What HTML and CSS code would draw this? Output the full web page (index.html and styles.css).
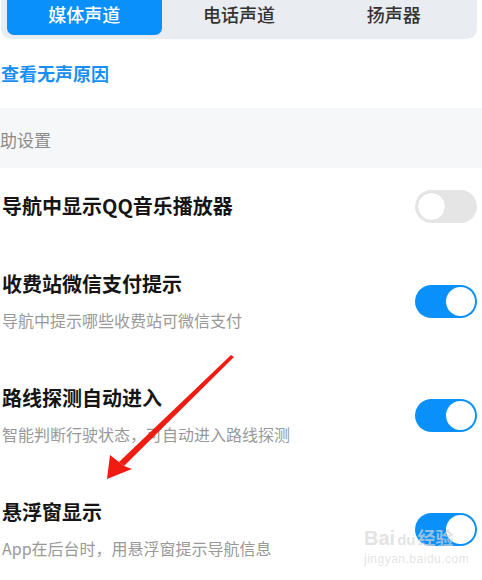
FILE: index.html
```html
<!DOCTYPE html>
<html lang="zh-CN">
<head>
<meta charset="utf-8">
<link rel="stylesheet" href="styles.css">
</head>
<body>
<div class="page">
  <div class="segment">
    <div class="tab active">媒体声道</div>
    <div class="tab">电话声道</div>
    <div class="tab">扬声器</div>
  </div>
  <div class="link-row"><span class="link">查看无声原因</span></div>
  <div class="section-head">助设置</div>
  <div class="row row-single">
    <div class="texts"><div class="title">导航中显示QQ音乐播放器</div></div>
    <div class="switch"><span class="knob"></span></div>
  </div>
  <div class="row">
    <div class="texts">
      <div class="title">收费站微信支付提示</div>
      <div class="sub">导航中提示哪些收费站可微信支付</div>
    </div>
    <div class="switch on"><span class="knob"></span></div>
  </div>
  <div class="row">
    <div class="texts">
      <div class="title">路线探测自动进入</div>
      <div class="sub">智能判断行驶状态，可自动进入路线探测</div>
    </div>
    <div class="switch on"><span class="knob"></span></div>
  </div>
  <div class="row">
    <div class="texts">
      <div class="title">悬浮窗显示</div>
      <div class="sub">App在后台时，用悬浮窗提示导航信息</div>
    </div>
    <div class="switch on"><span class="knob"></span></div>
  </div>

  <svg class="arrow" width="482" height="580" viewBox="0 0 482 580">
    <polygon points="231,361 234,363 124,472 119,468" fill="#f01c12"/>
    <polygon points="107,485 110,461 119,468 124,472 132,475" fill="#f01c12"/>
  </svg>

  <div class="watermark">
    <div class="wm-logo"><span class="wm-bai">Bai</span><span class="wm-paw">du</span><span class="wm-jy">经验</span></div>
    <div class="wm-url">jingyan.baidu.com</div>
  </div>
</div>
</body>
</html>
```

FILE: styles.css
```css
html, body {
  margin: 0;
  padding: 0;
  background: #ffffff;
}
body {
  font-family: "Noto Sans CJK SC", "Noto Sans", sans-serif;
  width: 482px;
  height: 580px;
  overflow: hidden;
}
.page {
  position: relative;
  width: 482px;
  height: 580px;
}
.segment {
  display: grid;
  grid-template-columns: repeat(3, 1fr);
  margin: -6px 0 0 1px;
  width: 476px;
  box-sizing: border-box;
  padding: 0 6px 4px 6px;
  background: #e9ecf0;
  border-radius: 0 0 10px 10px;
}
.tab {
  height: 41px;
  display: flex;
  align-items: center;
  justify-content: center;
  font-size: 18px;
  font-weight: 500;
  color: #333333;
  border-radius: 0 0 7px 7px;
  padding-bottom: 1px;
  box-sizing: border-box;
}
.tab.active {
  background: #0a90fb;
  color: #ffffff;
}
.link-row {
  height: 69px;
  display: flex;
  align-items: center;
  padding-left: 1px;
  box-sizing: border-box;
  padding-bottom: 2px;
}
.link {
  font-size: 18px;
  font-weight: 700;
  color: #1a8ff3;
}
.section-head {
  height: 60px;
  background: #f6f7f9;
  display: flex;
  align-items: center;
  font-size: 17px;
  color: #8c8c8c;
  padding-left: 0;
  padding-top: 3px;
  box-sizing: border-box;
}
.row {
  display: flex;
  align-items: center;
  justify-content: space-between;
  height: 114px;
  padding: 0 5px 0 2px;
  box-sizing: border-box;
}
.row-single {
  height: 76px;
}
.texts {
  display: flex;
  flex-direction: column;
}
.title {
  font-size: 20px;
  font-weight: 700;
  color: #151515;
  line-height: 28px;
}
.sub {
  font-size: 16px;
  color: #999999;
  line-height: 24px;
  margin-top: 10px;
}
.switch {
  width: 62px;
  height: 33px;
  border-radius: 17px;
  background: #e5e5e5;
  position: relative;
  flex: none;
  box-sizing: border-box;
}
.switch .knob {
  position: absolute;
  top: 2px;
  left: 2px;
  width: 29px;
  height: 29px;
  border-radius: 50%;
  background: #ffffff;
  box-sizing: border-box;
  border: 1px solid #dedede;
}
.switch.on {
  background: #0a90fb;
}
.switch.on .knob {
  left: auto;
  right: 2px;
  border: none;
}
.arrow {
  position: absolute;
  left: 0;
  top: 0;
  pointer-events: none;
}
.watermark {
  position: absolute;
  left: 364px;
  top: 531px;
  color: rgba(215, 215, 215, 0.7);
  font-family: "Liberation Sans", sans-serif;
  pointer-events: none;
}
.wm-logo {
  display: flex;
  align-items: baseline;
  font-size: 20px;
  font-weight: 700;
  line-height: 24px;
}
.wm-paw {
  font-size: 15px;
  margin: 0 2px;
}
.wm-jy {
  font-family: "Noto Sans CJK SC", sans-serif;
  font-size: 18px;
}
.wm-url {
  font-size: 12px;
  line-height: 14px;
  letter-spacing: 0.5px;
}
```
